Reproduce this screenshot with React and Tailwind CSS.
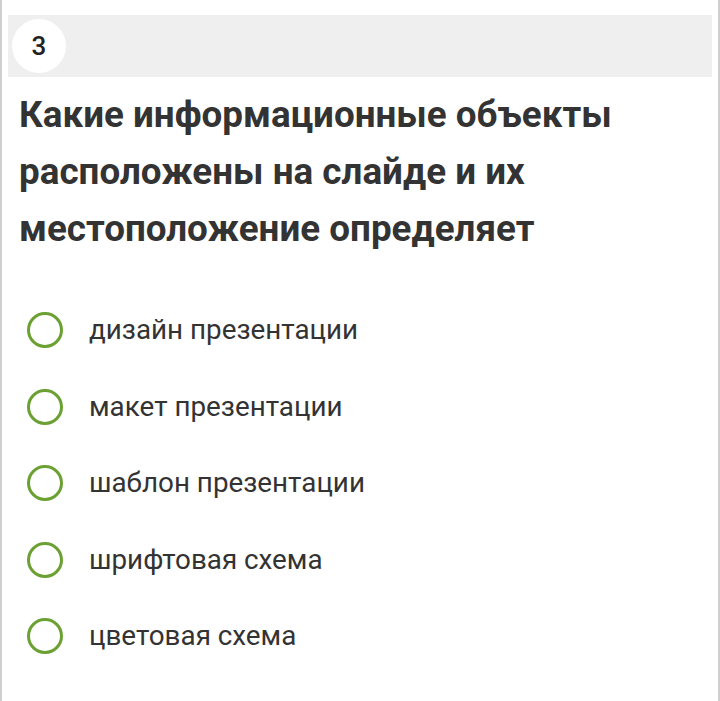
const options = [
  'дизайн презентации',
  'макет презентации',
  'шаблон презентации',
  'шрифтовая схема',
  'цветовая схема',
]

export default function App() {
  return (
    <div
      className="w-[720px] h-[701px] bg-white border-l-2 border-r-2 border-[#cfcfcf] text-[#333333] overflow-hidden"
      style={{ fontFamily: 'Roboto, "Noto Sans", sans-serif' }}
    >
      <div className="pt-[15px] px-[6px]">
        <div className="h-[62px] bg-[#efefef] flex items-center pl-[4px]">
          <div className="w-[54px] h-[54px] rounded-full bg-white flex items-center justify-center text-[26px] font-medium text-[#222]">
            3
          </div>
        </div>
      </div>

      <h1 className="mt-[9px] pl-[17px] pr-4 text-[36.8px] font-bold leading-[57px]">
        Какие информационные объекты расположены на слайде и их местоположение определяет
      </h1>

      <div className="mt-[55px] flex flex-col gap-[40.5px] pl-[25px]">
        {options.map((o) => (
          <label key={o} className="flex items-center h-[36px] cursor-pointer">
            <span className="w-[36px] h-[36px] rounded-full border-[3.5px] border-[#6ba032] shrink-0" />
            <span className="ml-[26px] text-[27.8px] leading-none text-[#333]">{o}</span>
          </label>
        ))}
      </div>
    </div>
  )
}
